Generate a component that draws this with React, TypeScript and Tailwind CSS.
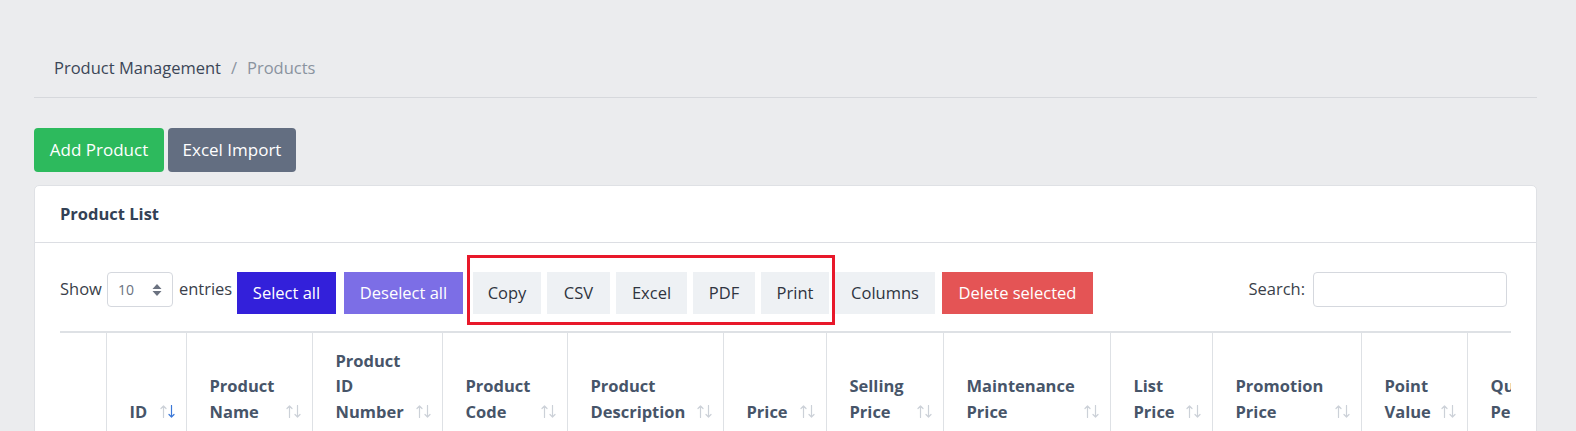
import React from "react";

const font = { fontFamily: '"Open Sans", "Noto Sans", sans-serif' };

function SortIcon({ active }: { active?: boolean }) {
  return (
    <svg width="15" height="13" viewBox="0 0 15 13" className="block">
      <g fill="none" strokeWidth="1.2" strokeLinecap="round" strokeLinejoin="round">
        <path d="M3.5 12.5 V1 M1 3.5 L3.5 1 L6 3.5" stroke="#ccd1d8" />
        <path d="M11.5 0.5 V12 M9 9.5 L11.5 12 L14 9.5" stroke={active ? "#3b78d8" : "#ccd1d8"} />
      </g>
    </svg>
  );
}

type Col = { lines: string[]; w: number; active?: boolean; noSort?: boolean };

const cols: Col[] = [
  { lines: [], w: 46, noSort: true },
  { lines: ["ID"], w: 80, active: true },
  { lines: ["Product", "Name"], w: 126 },
  { lines: ["Product", "ID", "Number"], w: 130 },
  { lines: ["Product", "Code"], w: 125 },
  { lines: ["Product", "Description"], w: 156 },
  { lines: ["Price"], w: 103 },
  { lines: ["Selling", "Price"], w: 117 },
  { lines: ["Maintenance", "Price"], w: 167 },
  { lines: ["List", "Price"], w: 102 },
  { lines: ["Promotion", "Price"], w: 149 },
  { lines: ["Point", "Value"], w: 106 },
  { lines: ["Quantity", "Per Unit"], w: 130 },
];

const tableWidth = cols.reduce((a, c) => a + c.w, 0);

const grayBtn = "h-[42px] bg-[#eef1f4] text-[16.5px] text-[#2f3440]";

export default function App() {
  return (
    <div
      className="min-h-screen bg-[#ebecee] pl-[34px] pr-[39px] pt-[56px] text-[16.5px]"
      style={font}
    >
      {/* breadcrumb */}
      <div className="border-b border-[#d6d8dc] pb-[17px] pl-[20px] leading-6">
        <span className="text-[#3b4657]">Product Management</span>
        <span className="mx-[10px] text-[#8a939f]">/</span>
        <span className="text-[#8a939f]">Products</span>
      </div>

      {/* action buttons */}
      <div className="mt-[30px] flex gap-[4px]">
        <button className="h-[44px] w-[130px] rounded-[4px] bg-[#2dba5d] text-[17px] text-white">
          Add Product
        </button>
        <button className="h-[44px] w-[128px] rounded-[4px] bg-[#636e81] text-[17px] text-white">
          Excel Import
        </button>
      </div>

      {/* card */}
      <div className="mt-[13px] rounded-[5px] border border-[#dfe1e5] bg-white">
        <div className="flex h-[57px] items-center border-b border-[#dcdee3] px-[25px]">
          <span className="font-bold text-[#334155]">Product List</span>
        </div>

        <div className="px-[25px] pt-[29px]">
          {/* toolbar */}
          <div className="flex items-start">
            <div className="flex h-[35px] w-[177px] items-center text-[#3a3f4a]">
              <span>Show</span>
              <div className="ml-[5px] mr-[6px] flex h-[35px] w-[66px] items-center justify-between rounded-[4px] border border-[#d5d8de] pl-[10px] pr-[10px]">
                <span className="text-[14px] text-[#6b7280]">10</span>
                <svg width="10" height="14" viewBox="0 0 10 14">
                  <path d="M5 1 L9.5 6 H0.5 Z" fill="#6b7280" />
                  <path d="M5 13 L9.5 8 H0.5 Z" fill="#6b7280" />
                </svg>
              </div>
              <span>entries</span>
            </div>
            <button className="h-[42px] w-[99px] bg-[#3320da] text-white">
              Select all
            </button>
            <button className="ml-[8px] h-[42px] w-[119px] bg-[#7c6ee6] text-white">
              Deselect all
            </button>
            <div className="relative ml-[10px] flex gap-[6px]">
              <span className="pointer-events-none absolute -bottom-[11px] -left-[6px] -right-[6px] -top-[17px] border-[3px] border-[#e8182a]" />
              <button className={`${grayBtn} w-[68px]`}>Copy</button>
              <button className={`${grayBtn} w-[63px]`}>CSV</button>
              <button className={`${grayBtn} w-[71px]`}>Excel</button>
              <button className={`${grayBtn} w-[62px]`}>PDF</button>
              <button className={`${grayBtn} w-[68px]`}>Print</button>
            </div>
            <button className={`${grayBtn} ml-[6px] w-[100px]`}>Columns</button>
            <button className="ml-[7px] h-[42px] w-[151px] bg-[#e45455] text-white">
              Delete selected
            </button>
            <div className="ml-auto mr-[4px] flex h-[35px] items-center text-[#3a3f4a]">
              <span>Search:</span>
              <input className="ml-[8px] h-[35px] w-[194px] rounded-[4px] border border-[#d5d8de] outline-none" />
            </div>
          </div>

          {/* table */}
          <div className="mt-[17px] overflow-hidden">
            <table className="border-collapse" style={{ tableLayout: "fixed", width: tableWidth }}>
              <thead>
                <tr>
                  {cols.map((c, i) => (
                    <th
                      key={i}
                      style={{ width: c.w }}
                      className="h-[109px] border-x border-t-2 border-[#dee1e5] pb-[17px] pl-[23px] pr-[11px] text-left align-bottom font-bold leading-[25.5px] text-[#475569] first:border-l-0"
                    >
                      <div className="flex items-end justify-between">
                        <div>
                          {c.lines.map((l, j) => (
                            <div key={j} className="whitespace-nowrap">
                              {l}
                            </div>
                          ))}
                        </div>
                        {!c.noSort && (
                          <div className="pb-[6px]">
                            <SortIcon active={c.active} />
                          </div>
                        )}
                      </div>
                    </th>
                  ))}
                </tr>
              </thead>
            </table>
          </div>
        </div>
      </div>
    </div>
  );
}
